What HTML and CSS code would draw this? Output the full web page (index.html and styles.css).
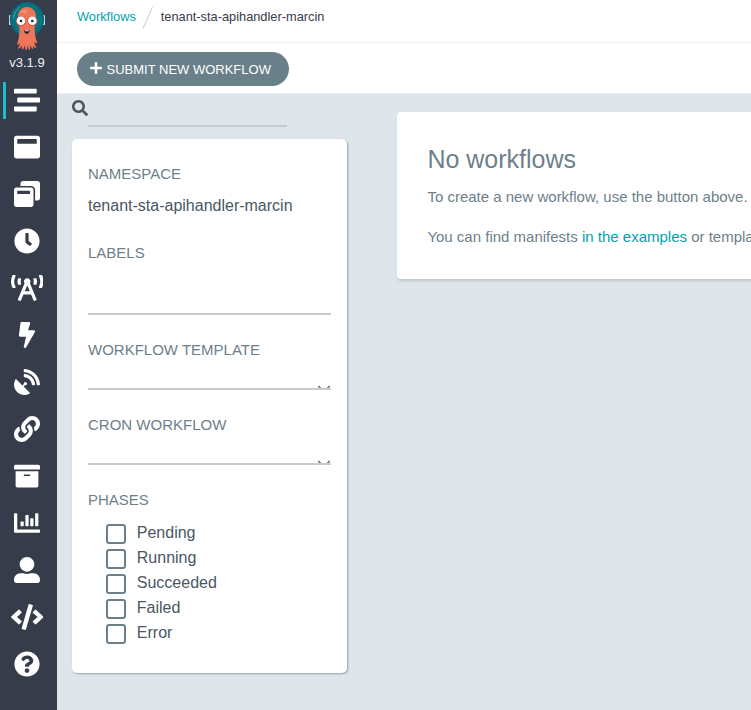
FILE: index.html
```html
<!DOCTYPE html>
<html lang="en">
<head>
<meta charset="utf-8">
<title>Workflows</title>
<link rel="stylesheet" href="styles.css">
</head>
<body>
<div class="app">
  <nav class="nav">
    <svg class="nav__logo" viewBox="0 0 38 50">
      <rect x="1" y="14" width="2" height="10" rx=".6" fill="#c9dde6"/>
      <rect x="35" y="14" width="2" height="10" rx=".6" fill="#c9dde6"/>
      <circle cx="19" cy="18.300" r="17.200" fill="#066675"/>
      <circle cx="19" cy="18.300" r="15.700" fill="#08727f"/>
      <path fill="none" stroke="#4fa3ae" stroke-width="1" d="M5.500 17C6 12 8.500 8.500 12 6"/>
      <path fill="#ee7557" d="M19 6c-5.200 0-9 4-9 9.500 0 4 1.400 8 1.400 11.500 0 6-.2 10-2.400 16.500 1.500.6 2.300-.5 2.900-1.700-.1 2.600-.7 3.400-2 5.500 2 .8 3-.9 3.600-3l.4 4c1.500.4 2.200-1 2.500-4l1.300 4.700c1.200 0 1.600-1 1.500-4.700l1.800 4.800c1.300 0 1.400-1.300 1-5l2.300 3.900c1.200-.2 1.200-1.500.6-4 1 2 1.900 3.300 3.700 2.700-1.300-2.200-2-3.700-2.200-6.200.8 1.100 1.500 2 3 1.500-2-5-2.800-9-2.800-15 0-3.500 1.400-7.500 1.400-11.500C28 10 24.200 6 19 6z"/>
      <ellipse cx="16.500" cy="10.500" rx="3" ry="1.800" fill="#f39a80" opacity=".7"/>
      <circle cx="13" cy="20.300" r="5" fill="#d9553f"/>
      <circle cx="24.300" cy="20.300" r="5" fill="#d9553f"/>
      <circle cx="13" cy="19.800" r="4.300" fill="#fff"/>
      <circle cx="24.300" cy="19.800" r="4.300" fill="#fff"/>
      <circle cx="13" cy="20" r="1.300" fill="#10243a"/>
      <circle cx="24.300" cy="20" r="1.300" fill="#10243a"/>
      <path fill="#10243a" d="M15.800 29q3 1 6 0-.5 3.800-3 3.800t-3-3.800z"/>
      <path fill="#fff" d="M16.800 29.300q2 .5 4 0v1h-4z"/>
    </svg>
    <div class="nav__version">v3.1.9</div>
    <a class="nav__item nav__item--active"><svg viewBox="0 0 512 512"><path d="M16 128h416c8.840 0 16-7.160 16-16V48c0-8.840-7.160-16-16-16H16C7.160 32 0 39.160 0 48v64c0 8.840 7.160 16 16 16zm480 80H80c-8.840 0-16 7.160-16 16v64c0 8.840 7.160 16 16 16h416c8.840 0 16-7.160 16-16v-64c0-8.840-7.160-16-16-16zm-64 176H16c-8.840 0-16 7.160-16 16v64c0 8.840 7.160 16 16 16h416c8.840 0 16-7.160 16-16v-64c0-8.840-7.160-16-16-16z"/></svg></a>
    <a class="nav__item"><svg viewBox="0 0 512 512"><path d="M464 32H48C21.500 32 0 53.500 0 80v352c0 26.500 21.500 48 48 48h416c26.500 0 48-21.500 48-48V80c0-26.500-21.500-48-48-48zm-16 160H64v-84c0-6.600 5.400-12 12-12h360c6.600 0 12 5.400 12 12v84z"/></svg></a>
    <a class="nav__item"><svg viewBox="0 0 512 512"><path d="M512 48v288c0 26.500-21.500 48-48 48h-48V176c0-44.100-35.900-80-80-80H128V48c0-26.500 21.500-48 48-48h288c26.500 0 48 21.500 48 48zM384 176v288c0 26.500-21.500 48-48 48H48c-26.500 0-48-21.500-48-48V176c0-26.500 21.500-48 48-48h288c26.500 0 48 21.500 48 48zm-68 28c0-6.600-5.400-12-12-12H76c-6.600 0-12 5.400-12 12v52h252v-52z"/></svg></a>
    <a class="nav__item"><svg viewBox="0 0 512 512"><path d="M256,8C119,8,8,119,8,256S119,504,256,504,504,393,504,256,393,8,256,8Zm92.490,313h0l-20,25a16,16,0,0,1-22.490,2.500h0l-67-49.720a40,40,0,0,1-15-31.230V112a16,16,0,0,1,16-16h32a16,16,0,0,1,16,16V256l58,42.500A16,16,0,0,1,348.490,321Z"/></svg></a>
    <a class="nav__item"><svg class="wide" viewBox="0 0 640 512"><path d="M150.940 192h33.730c11.010 0 18.610-10.830 14.860-21.180-4.930-13.580-7.550-27.980-7.550-42.820s2.620-29.240 7.550-42.820C203.290 74.830 195.680 64 184.670 64h-33.730c-7.010 0-13.460 4.490-15.410 11.230C130.640 92.210 128 109.880 128 128c0 18.120 2.640 35.790 7.540 52.760 1.940 6.740 8.390 11.240 15.400 11.240zM89.920 23.340C95.560 12.720 87.970 0 75.960 0H40.630c-6.270 0-12.140 3.590-14.740 9.310C9.400 45.540 0 85.650 0 128c0 24.750 3.120 68.330 26.690 118.860 2.620 5.630 8.420 9.140 14.610 9.140h34.840c12.020 0 19.610-12.740 13.950-23.370-49.780-93.320-16.710-178.150-.17-209.290zM614.060 9.290C611.460 3.580 605.600 0 599.330 0h-35.420c-11.980 0-19.660 12.660-14.020 23.250 18.270 34.290 48.420 119.420.28 209.230-5.720 10.680 1.800 23.520 13.910 23.520h35.230c6.270 0 12.130-3.580 14.730-9.290C630.570 210.480 640 170.360 640 128s-9.420-82.480-25.940-118.710zM489.060 64h-33.730c-11.010 0-18.610 10.830-14.860 21.180 4.930 13.580 7.550 27.980 7.550 42.820s-2.620 29.240-7.550 42.820c-3.760 10.350 3.850 21.180 14.860 21.180h33.730c7.020 0 13.460-4.490 15.410-11.240 4.900-16.970 7.530-34.640 7.530-52.760 0-18.120-2.640-35.790-7.540-52.760-1.940-6.750-8.390-11.240-15.400-11.240zm-116.300 100.120c7.050-10.290 11.200-22.710 11.200-36.120 0-35.350-28.630-64-63.960-64-35.320 0-63.960 28.650-63.960 64 0 13.410 4.150 25.830 11.200 36.120l-130.500 313.410c-3.400 8.150.46 17.520 8.610 20.920l29.510 12.310c8.150 3.400 17.520-.46 20.910-8.610L244.960 384h150.070l49.200 118.150c3.400 8.160 12.760 12.010 20.910 8.610l29.510-12.310c8.150-3.400 12-12.770 8.610-20.920l-130.500-313.410zM271.620 320L320 203.810 368.380 320h-96.760z"/></svg></a>
    <a class="nav__item"><svg viewBox="-96 0 512 512"><path d="M296 160H180.600l42.600-129.800C227.200 15 215.700 0 200 0H56C44 0 33.800 8.900 32.200 20.800l-32 240C-1.700 275.200 9.500 288 24 288h118.700L96.600 482.500c-3.600 15.200 8 29.500 23.300 29.500 8.400 0 16.400-4.400 20.800-12l176-304c9.300-15.900-2.200-36-20.700-36z"/></svg></a>
    <a class="nav__item"><svg viewBox="0 0 512 512"><path d="M305.450 462.590c7.390 7.300 6.190 20.100-3 25-77.710 41.800-176.730 29.910-242.340-35.710C-5.500 386.280-17.400 287.360 24.410 209.550c4.890-9.090 17.690-10.290 25-3L166.230 323.370l27.390-27.400c-.68-2.600-1.590-5-1.590-7.810a32 32 0 1 1 32 32c-2.790 0-5.200-.89-7.790-1.590l-27.410 27.410zM511.980 303.070a16.100 16.100 0 0 1-16 17H463.860a15.970 15.970 0 0 1-15.890-15C440.470 175.550 336.450 70.530 207.030 63.530a15.840 15.840 0 0 1-15-15.910V16.030A16.090 16.090 0 0 1 209.030.02C372.250 8.620 503.470 139.840 511.980 303.070zm-96.020-.3a16.210 16.210 0 0 1-16.110 17.300H367.650a16.070 16.070 0 0 1-15.900-14.710c-6.900-77-68.110-138.910-144.920-145.220a15.940 15.940 0 0 1-14.800-15.890V112.130a16.130 16.130 0 0 1 17.300-16.090C319.450 104.540 407.560 192.650 415.960 302.770z"/></svg></a>
    <a class="nav__item"><svg viewBox="0 0 512 512"><path d="M326.612 185.391c59.747 59.809 58.927 155.698.36 214.590-.11.12-.24.25-.36.37l-67.200 67.200c-59.270 59.270-155.699 59.262-214.960 0-59.270-59.260-59.270-155.700 0-214.960l37.106-37.106c9.840-9.840 26.786-3.300 27.294 10.606.648 17.722 3.826 35.527 9.690 52.721 1.986 5.822.567 12.262-3.783 16.612l-13.087 13.087c-28.026 28.026-28.905 73.660-1.155 101.960 28.024 28.579 74.086 28.749 102.325.51l67.200-67.190c28.191-28.191 28.073-73.757 0-101.830-3.701-3.694-7.429-6.564-10.341-8.569a16.037 16.037 0 0 1-6.947-12.606c-.396-10.567 3.348-21.456 11.698-29.806l21.054-21.055c5.521-5.521 14.182-6.199 20.584-1.731a152.482 152.482 0 0 1 20.522 17.197zM467.547 44.449c-59.261-59.262-155.690-59.270-214.960 0l-67.200 67.200c-.12.12-.25.25-.36.37-58.566 58.892-59.387 154.781.36 214.590a152.454 152.454 0 0 0 20.521 17.196c6.402 4.468 15.064 3.789 20.584-1.731l21.054-21.055c8.350-8.350 12.094-19.239 11.698-29.806a16.037 16.037 0 0 0-6.947-12.606c-2.912-2.005-6.640-4.875-10.341-8.569-28.073-28.073-28.191-73.639 0-101.830l67.200-67.190c28.239-28.239 74.300-28.069 102.325.51 27.750 28.300 26.872 73.934-1.155 101.960l-13.087 13.087c-4.350 4.350-5.769 10.790-3.783 16.612 5.864 17.194 9.042 34.999 9.690 52.721.509 13.906 17.454 20.446 27.294 10.606l37.106-37.106c59.271-59.259 59.271-155.699.001-214.959z"/></svg></a>
    <a class="nav__item"><svg viewBox="0 0 512 512"><path d="M32 448c0 17.700 14.300 32 32 32h384c17.700 0 32-14.300 32-32V160H32v288zm160-212c0-6.600 5.400-12 12-12h104c6.600 0 12 5.400 12 12v8c0 6.600-5.400 12-12 12H204c-6.600 0-12-5.400-12-12v-8zM480 32H32C14.300 32 0 46.300 0 64v48c0 8.800 7.200 16 16 16h480c8.800 0 16-7.200 16-16V64c0-17.700-14.300-32-32-32z"/></svg></a>
    <a class="nav__item"><svg viewBox="0 0 512 512"><path d="M332.800 320h38.400c6.400 0 12.800-6.400 12.800-12.800V172.800c0-6.400-6.400-12.800-12.800-12.800h-38.400c-6.400 0-12.800 6.400-12.800 12.800v134.400c0 6.400 6.400 12.800 12.800 12.800zm96 0h38.400c6.400 0 12.800-6.400 12.800-12.800V76.800c0-6.400-6.400-12.800-12.800-12.800h-38.400c-6.400 0-12.800 6.400-12.800 12.800v230.400c0 6.400 6.400 12.800 12.800 12.800zm-288 0h38.400c6.400 0 12.800-6.400 12.800-12.800v-70.400c0-6.400-6.400-12.800-12.800-12.800h-38.400c-6.400 0-12.800 6.400-12.800 12.800v70.400c0 6.400 6.400 12.800 12.800 12.800zm96 0h38.400c6.400 0 12.800-6.400 12.800-12.800V108.800c0-6.400-6.400-12.800-12.800-12.800h-38.400c-6.400 0-12.800 6.400-12.800 12.800v198.400c0 6.400 6.400 12.800 12.800 12.800zM496 384H64V80c0-8.840-7.160-16-16-16H16C7.160 64 0 71.160 0 80v336c0 17.670 14.330 32 32 32h464c8.840 0 16-7.160 16-16v-32c0-8.840-7.160-16-16-16z"/></svg></a>
    <a class="nav__item"><svg viewBox="0 0 512 512"><path d="M256 288c79.500 0 144-64.500 144-144S335.500 0 256 0 112 64.500 112 144s64.500 144 144 144zm128 32h-55.100c-22.200 10.200-46.900 16-72.900 16s-50.600-5.800-72.900-16H128C57.300 320 0 377.300 0 448v16c0 26.500 21.500 48 48 48h416c26.500 0 48-21.500 48-48v-16c0-70.700-57.300-128-128-128z"/></svg></a>
    <a class="nav__item"><svg class="wide" viewBox="0 0 640 512"><path d="M278.900 511.500l-61-17.700c-6.400-1.800-10-8.500-8.200-14.900L346.200 8.700c1.800-6.400 8.500-10 14.900-8.200l61 17.700c6.400 1.800 10 8.500 8.200 14.900L293.800 503.300c-1.900 6.400-8.500 10.100-14.900 8.200zm-114-112.200l43.500-46.400c4.600-4.900 4.300-12.700-.8-17.200L117 256l90.600-79.700c5.100-4.500 5.500-12.300.8-17.200l-43.500-46.400c-4.500-4.800-12.100-5.100-17-.5L3.800 247.200c-5.100 4.700-5.100 12.800 0 17.500l144.100 135.100c4.900 4.600 12.500 4.400 17-.5zm327.200.6l144.100-135.100c5.100-4.700 5.100-12.800 0-17.500L492.100 112.100c-4.800-4.500-12.400-4.300-17 .5L431.600 159c-4.600 4.900-4.300 12.700.8 17.200L523 256l-90.600 79.700c-5.100 4.500-5.500 12.300-.8 17.200l43.500 46.400c4.500 4.900 12.100 5.100 17 .6z"/></svg></a>
    <a class="nav__item"><svg viewBox="0 0 512 512"><path d="M504 256c0 136.997-111.043 248-248 248S8 392.997 8 256C8 119.083 119.043 8 256 8s248 111.083 248 248zM262.655 90c-54.497 0-89.255 22.957-116.549 63.758-3.536 5.286-2.353 12.415 2.715 16.258l34.699 26.310c5.205 3.947 12.621 3.008 16.665-2.122 17.864-22.658 30.113-35.797 57.303-35.797 20.429 0 45.698 13.148 45.698 32.958 0 14.976-12.363 22.667-32.534 33.976C247.128 238.528 216 254.941 216 296v4c0 6.627 5.373 12 12 12h56c6.627 0 12-5.373 12-12v-1.333c0-28.462 83.186-29.647 83.186-106.667 0-58.002-60.165-102-116.531-102zM256 338c-25.365 0-46 20.635-46 46 0 25.364 20.635 46 46 46s46-20.636 46-46c0-25.364-20.635-46-46-46z"/></svg></a>
  </nav>
  <main class="main">
    <header class="crumbs">
      <a class="crumbs__link">Workflows</a>
      <svg class="crumbs__sep" viewBox="0 0 12 24"><path d="M1 22.500 10.500 1" fill="none" stroke="#ccd6dd" stroke-width="1.200"/></svg>
      <span>tenant-sta-apihandler-marcin</span>
    </header>
    <div class="toolbar">
      <button class="button"><svg viewBox="0 0 448 512"><path d="M416 208H272V64c0-17.670-14.330-32-32-32h-32c-17.670 0-32 14.330-32 32v144H32c-17.670 0-32 14.330-32 32v32c0 17.670 14.330 32 32 32h144v144c0 17.670 14.330 32 32 32h32c17.670 0 32-14.330 32-32V304h144c17.670 0 32-14.330 32-32v-32c0-17.670-14.330-32-32-32z"/></svg>SUBMIT NEW WORKFLOW</button>
    </div>
    <div class="content">
      <aside class="side">
        <div class="search">
          <svg viewBox="0 0 512 512"><path d="M505 442.700L405.300 343c-4.500-4.500-10.600-7-17-7H372c27.600-35.300 44-79.700 44-128C416 93.100 322.900 0 208 0S0 93.100 0 208s93.100 208 208 208c48.300 0 92.700-16.400 128-44v16.300c0 6.400 2.500 12.500 7 17l99.700 99.700c9.400 9.400 24.600 9.400 33.900 0l28.300-28.300c9.400-9.400 9.400-24.600.1-34zM208 336c-70.700 0-128-57.200-128-128 0-70.700 57.200-128 128-128 70.700 0 128 57.200 128 128 0 70.700-57.200 128-128 128z"/></svg>
          <div class="search__field"></div>
        </div>
        <section class="filters">
          <h5 class="label">NAMESPACE</h5>
          <div class="namespace">tenant-sta-apihandler-marcin</div>
          <h5 class="label">LABELS</h5>
          <div class="field field--tall"></div>
          <h5 class="label">WORKFLOW TEMPLATE</h5>
          <div class="field"><svg viewBox="0 0 12 3"><path d="M0 1l2.600 2M12 1 9.400 3"/></svg></div>
          <h5 class="label">CRON WORKFLOW</h5>
          <div class="field"><svg viewBox="0 0 12 3"><path d="M0 1l2.600 2M12 1 9.400 3"/></svg></div>
          <h5 class="label">PHASES</h5>
          <ul class="phases">
            <li><i class="box"></i><span>Pending</span></li>
            <li><i class="box"></i><span>Running</span></li>
            <li><i class="box"></i><span>Succeeded</span></li>
            <li><i class="box"></i><span>Failed</span></li>
            <li><i class="box"></i><span>Error</span></li>
          </ul>
        </section>
      </aside>
      <section class="empty">
        <h4>No workflows</h4>
        <p>To create a new workflow, use the button above.</p>
        <p>You can find manifests <a>in the examples</a> or templates</p>
      </section>
    </div>
  </main>
</div>
</body>
</html>
```
FILE: styles.css
```css
* { box-sizing: border-box; }
body {
  margin: 0;
  font-family: "Liberation Sans", Arial, sans-serif;
  font-size: 16px;
  color: #495763;
  background: #dee6eb;
}
h4, h5, p, ul { margin: 0; padding: 0; font-weight: 400; }
svg { display: block; flex: none; }
.app { display: flex; width: 100vw; height: 100vh; overflow: hidden; }

.nav { flex: none; width: 57px; background: #363c4a; }
.nav__logo { width: 38px; height: 50px; margin: 1px 0 1px 8px; }
.nav__version {
  height: 25px;
  margin-right: 3px;
  line-height: 21px;
  font-size: 13px;
  text-align: center;
  color: #f0f3f5;
}
.nav__item {
  display: flex;
  align-items: center;
  justify-content: center;
  width: 48px;
  height: 37px;
  margin: 0 0 10px 3px;
  padding-bottom: 2px;
}
.nav__version + .nav__item { margin-top: 5px; }
.nav__item--active { box-shadow: inset 3px 0 #18becf; }
.nav__item svg { width: 26px; height: 26px; fill: #fff; }
.nav__item svg.wide { width: 32.5px; }

.main { flex: 1; min-width: 0; overflow: hidden; }
.crumbs {
  display: flex;
  align-items: center;
  height: 43px;
  padding: 0 0 9px 20px;
  border-bottom: 1px solid #edf0f2;
  background: #fff;
  font-size: 12.8px;
  color: #363c4a;
  white-space: nowrap;
}
.crumbs__link, .empty a { color: #00a2b3; }
.crumbs__sep { width: 12px; height: 24px; margin: 2px 6.6px 0 6.4px; }
.toolbar { height: 51px; padding: 9px 20px; background: #fff; border-bottom: 1px solid #edf1f3; }
.button {
  display: flex;
  align-items: center;
  width: 212px;
  height: 34px;
  padding: 0 0 0 13px;
  border: 0;
  border-radius: 17px;
  background: #697f89;
  color: #fff;
  font: 13px "Liberation Sans", Arial, sans-serif;
  white-space: nowrap;
}
.button svg { width: 12px; height: 14px; margin: 0 4.5px 2px 0; fill: #fff; }

.content { display: flex; align-items: flex-start; }
.side { flex: none; width: 275px; margin-left: 15px; }
.search { display: flex; height: 45px; padding-top: 6px; }
.search svg { width: 16px; height: 16px; fill: #495763; }
.search__field { width: 199px; height: 27px; border-bottom: 2px solid #cacaca; }

.filters {
  height: 534px;
  padding: 25px 16px 0;
  border-radius: 5px;
  background: #fff;
  box-shadow: 1px 1px 2px #8fa4b1;
}
.label { height: 20px; line-height: 20px; font-size: 15px; color: #6d7f8b; }
.namespace { height: 59px; padding-top: 12px; line-height: 20px; }
.field {
  display: flex;
  align-items: flex-end;
  justify-content: flex-end;
  height: 30px;
  margin-bottom: 25px;
  border-bottom: 2px solid #cacaca;
}
.field--tall { height: 52px; }
.field svg { width: 12px; height: 3px; margin-right: 1px; stroke: #495763; fill: none; stroke-width: 1.2; }
.phases { list-style: none; padding: 11px 0 0 18px; }
.phases li { display: flex; height: 25px; line-height: 24px; }
.box { width: 20px; height: 20px; margin: 3px 10.8px 0 0; border: 2px solid #6d7f8b; border-radius: 3px; }

.empty {
  flex: none;
  width: 500px;
  height: 167px;
  margin: 18px 0 0 50px;
  padding: 32px 30.4px 0;
  border-radius: 4px;
  background: #fff;
  box-shadow: 1px 2px 3px #bcc7d0;
  color: #6d7f8b;
}
.empty h4 { height: 31px; line-height: 31px; font-size: 25px; }
.empty p { height: 40px; line-height: 44px; font-size: 15px; white-space: nowrap; }
```
